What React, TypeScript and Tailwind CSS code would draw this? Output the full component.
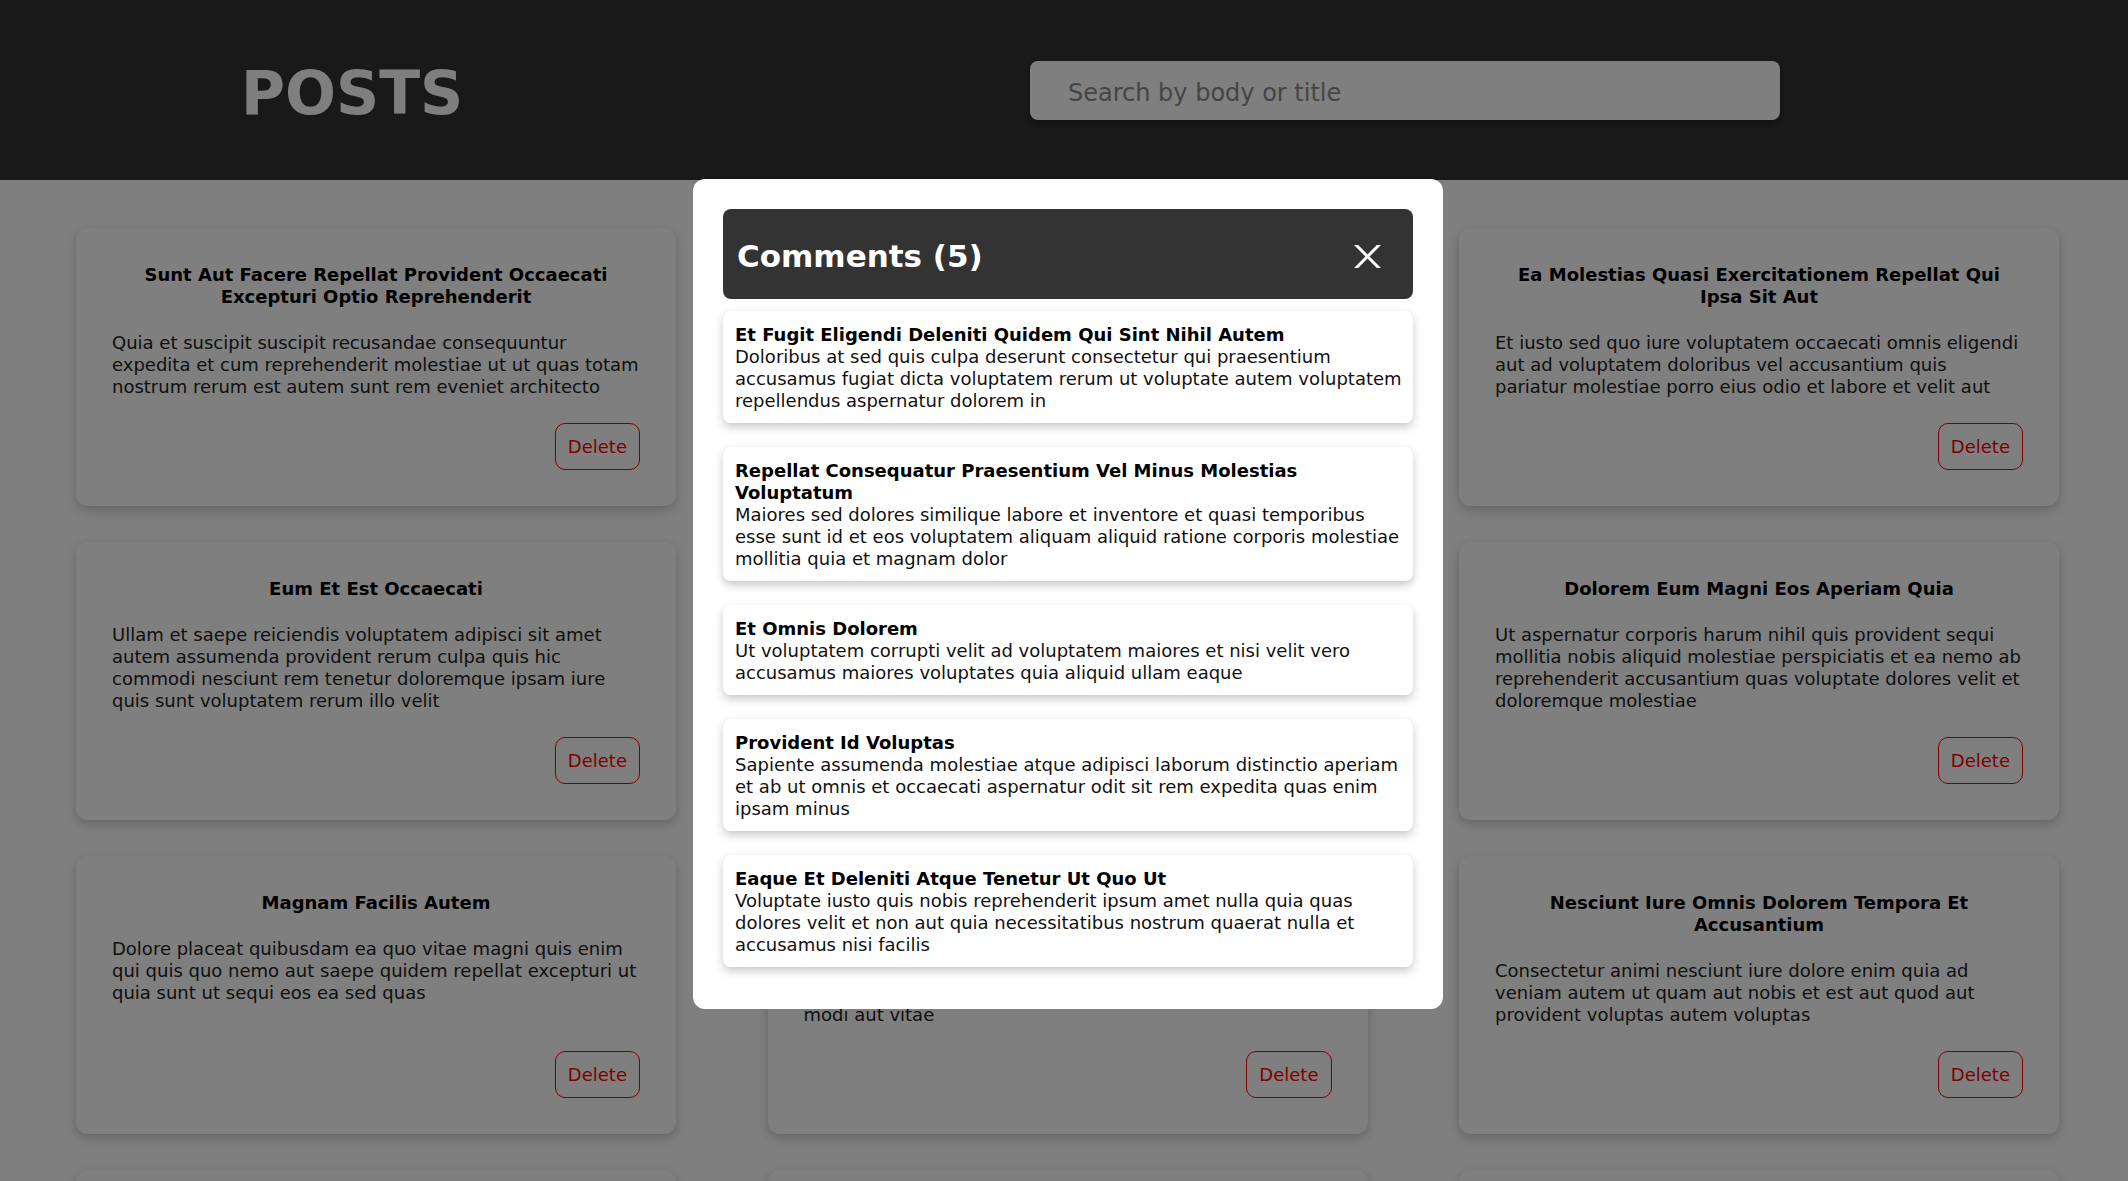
import React from "react";

const posts = [
  {
    title: "Sunt Aut Facere Repellat Provident Occaecati Excepturi Optio Reprehenderit",
    body: "Quia et suscipit suscipit recusandae consequuntur expedita et cum reprehenderit molestiae ut ut quas totam nostrum rerum est autem sunt rem eveniet architecto",
  },
  {
    title: "Qui Est Esse",
    body: "Est rerum tempore vitae sequi sint nihil reprehenderit dolor beatae ea dolores neque fugiat blanditiis voluptate porro vel nihil molestiae ut reiciendis qui aperiam non debitis possimus qui neque nisi nulla",
  },
  {
    title: "Ea Molestias Quasi Exercitationem Repellat Qui Ipsa Sit Aut",
    body: "Et iusto sed quo iure voluptatem occaecati omnis eligendi aut ad voluptatem doloribus vel accusantium quis pariatur molestiae porro eius odio et labore et velit aut",
  },
  {
    title: "Eum Et Est Occaecati",
    body: "Ullam et saepe reiciendis voluptatem adipisci sit amet autem assumenda provident rerum culpa quis hic commodi nesciunt rem tenetur doloremque ipsam iure quis sunt voluptatem rerum illo velit",
  },
  {
    title: "Nesciunt Quas Odio",
    body: "Repudiandae veniam quaerat sunt sed alias aut fugiat sit autem sed est voluptatem omnis possimus esse voluptatibus quis est aut tenetur dolor neque",
  },
  {
    title: "Dolorem Eum Magni Eos Aperiam Quia",
    body: "Ut aspernatur corporis harum nihil quis provident sequi mollitia nobis aliquid molestiae perspiciatis et ea nemo ab reprehenderit accusantium quas voluptate dolores velit et doloremque molestiae",
  },
  {
    title: "Magnam Facilis Autem",
    body: "Dolore placeat quibusdam ea quo vitae magni quis enim qui quis quo nemo aut saepe quidem repellat excepturi ut quia sunt ut sequi eos ea sed quas",
  },
  {
    title: "Dolorem Dolore Est Ipsam",
    body: "Dignissimos aperiam dolorem qui eum facilis quibusdam animi sint suscipit qui sint possimus cum quaerat magni maiores excepturi ipsam ut commodi dolor voluptatum modi aut vitae",
  },
  {
    title: "Nesciunt Iure Omnis Dolorem Tempora Et Accusantium",
    body: "Consectetur animi nesciunt iure dolore enim quia ad veniam autem ut quam aut nobis et est aut quod aut provident voluptas autem voluptas",
  },
  {
    title: "Optio Molestias Id Quia Eum",
    body: "Quo et expedita modi cum officia vel magni doloribus qui repudiandae vero nisi sit quos veniam quod sed accusamus veritatis error",
  },
  {
    title: "Et Ea Vero Quia Laudantium Autem",
    body: "Delectus reiciendis molestiae occaecati non minima eveniet qui voluptatibus accusamus in eum beatae sit vel qui neque voluptates ut commodi qui incidunt ut animi commodi",
  },
  {
    title: "In Quibusdam Tempore Odit Est Dolorem",
    body: "Itaque id aut magnam praesentium quia et ea odit et ea voluptas et sapiente quia nihil amet occaecati quia id voluptatem incidunt ea est distinctio odio",
  },
];

const comments = [
  {
    name: "Et Fugit Eligendi Deleniti Quidem Qui Sint Nihil Autem",
    body: "Doloribus at sed quis culpa deserunt consectetur qui praesentium accusamus fugiat dicta voluptatem rerum ut voluptate autem voluptatem repellendus aspernatur dolorem in",
  },
  {
    name: "Repellat Consequatur Praesentium Vel Minus Molestias Voluptatum",
    body: "Maiores sed dolores similique labore et inventore et quasi temporibus esse sunt id et eos voluptatem aliquam aliquid ratione corporis molestiae mollitia quia et magnam dolor",
  },
  {
    name: "Et Omnis Dolorem",
    body: "Ut voluptatem corrupti velit ad voluptatem maiores et nisi velit vero accusamus maiores voluptates quia aliquid ullam eaque",
  },
  {
    name: "Provident Id Voluptas",
    body: "Sapiente assumenda molestiae atque adipisci laborum distinctio aperiam et ab ut omnis et occaecati aspernatur odit sit rem expedita quas enim ipsam minus",
  },
  {
    name: "Eaque Et Deleniti Atque Tenetur Ut Quo Ut",
    body: "Voluptate iusto quis nobis reprehenderit ipsum amet nulla quia quas dolores velit et non aut quia necessitatibus nostrum quaerat nulla et accusamus nisi facilis",
  },
];

const CloseIcon = () => (
  <svg width="27" height="23" viewBox="0 0 27 23" fill="#fff">
    <polygon points="0,0 4.2,0 27,23 22.8,23" />
    <polygon points="22.8,0 27,0 4.2,23 0,23" />
  </svg>
);

const App = () => {
  return (
    <div className="min-h-screen bg-white font-['DejaVu_Sans',Verdana,sans-serif] text-black">
      <header className="h-[180px] bg-[#333] flex items-center pl-[241px]">
        <div className="w-[789px] shrink-0 pt-[5px]">
          <h1 className="text-[60px] font-bold text-white leading-none">POSTS</h1>
        </div>
        <input
          type="text"
          placeholder="Search by body or title"
          className="w-[750px] h-[59px] rounded-lg bg-white pl-[38px] pr-4 pt-[6px] text-[24px] text-black placeholder:text-[#8a8a8a] outline-none shadow-[0_4px_8px_rgba(0,0,0,0.35)]"
        />
      </header>

      <main className="grid grid-cols-[600px_600px_600px] gap-x-[91.5px] gap-y-9 pl-[76px] pt-12 pb-12">
        {posts.map((post, i) => (
          <div
            key={i}
            className="flex flex-col rounded-xl bg-white p-9 shadow-[0_4px_12px_rgba(0,0,0,0.22)]"
          >
            <h3 className="text-center text-[18px] font-bold leading-[22px]">
              {post.title}
            </h3>
            <p className="mt-6 text-[18px] leading-[22px] text-[#222]">{post.body}</p>
            <div className="mt-auto pt-[25px] flex justify-end">
              <button className="rounded-[10px] border border-[#ff0000] px-3 py-3 text-[18px] leading-[21px] text-[#ff0000]">
                Delete
              </button>
            </div>
          </div>
        ))}
      </main>

      <div className="fixed inset-0 bg-black/50 flex items-start justify-center pt-[179px] pl-[8px]">
        <div className="w-[750px] rounded-xl bg-white p-[30px] flex flex-col">
          <div className="h-[90px] rounded-lg bg-[#333] flex items-center justify-between pl-[14px] pr-[32px] pt-[4px]">
            <h2 className="text-[31px] font-bold text-white">Comments (5)</h2>
            <button className="flex items-center">
              <CloseIcon />
            </button>
          </div>
          {comments.map((c, i) => (
            <div
              key={i}
              className="my-3 rounded-lg bg-white pl-3 pr-1 pt-[13px] pb-[11px] shadow-[0_4px_10px_rgba(0,0,0,0.22)]"
            >
              <h4 className="text-[18px] font-bold leading-[22px]">{c.name}</h4>
              <p className="text-[18px] leading-[22px] text-[#111]">{c.body}</p>
            </div>
          ))}
        </div>
      </div>
    </div>
  );
};

export default App;
